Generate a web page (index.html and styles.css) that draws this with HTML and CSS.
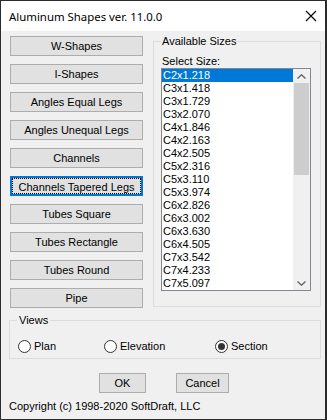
FILE: index.html
```html
<!DOCTYPE html>
<html lang="en">
<head>
    <meta charset="UTF-8">
    <meta name="viewport" content="width=device-width, initial-scale=1.0">
    <title>Aluminum Shapes</title>
    <link rel="stylesheet" href="styles.css">
</head>
<body>
    <div class="window">
        <div class="titlebar">
            <span class="title">Aluminum Shapes ver. 11.0.0</span>
            <svg class="close" width="12" height="12" viewBox="0 0 12 12">
                <path d="M1 1 L11 11 M11 1 L1 11" stroke="#000" stroke-width="1.1" fill="none"/>
            </svg>
        </div>

        <div class="content">
            <div class="main-row">
                <div class="shape-buttons">
                    <button class="btn">W-Shapes</button>
                    <button class="btn">I-Shapes</button>
                    <button class="btn">Angles Equal Legs</button>
                    <button class="btn">Angles Unequal Legs</button>
                    <button class="btn">Channels</button>
                    <button class="btn focused">Channels Tapered Legs</button>
                    <button class="btn">Tubes Square</button>
                    <button class="btn">Tubes Rectangle</button>
                    <button class="btn">Tubes Round</button>
                    <button class="btn">Pipe</button>
                </div>

                <fieldset class="group sizes">
                    <legend>Available Sizes</legend>
                    <div class="select-label">Select Size:</div>
                    <div class="listbox">
                        <div class="list-items">
                            <div class="item selected">C2x1.218</div>
                            <div class="item">C3x1.418</div>
                            <div class="item">C3x1.729</div>
                            <div class="item">C3x2.070</div>
                            <div class="item">C4x1.846</div>
                            <div class="item">C4x2.163</div>
                            <div class="item">C4x2.505</div>
                            <div class="item">C5x2.316</div>
                            <div class="item">C5x3.110</div>
                            <div class="item">C5x3.974</div>
                            <div class="item">C6x2.826</div>
                            <div class="item">C6x3.002</div>
                            <div class="item">C6x3.630</div>
                            <div class="item">C6x4.505</div>
                            <div class="item">C7x3.542</div>
                            <div class="item">C7x4.233</div>
                            <div class="item">C7x5.097</div>
                        </div>
                        <div class="scrollbar">
                            <div class="arrow">
                                <svg width="9" height="5" viewBox="0 0 9 5"><polyline points="0.5,4.5 4.5,0.8 8.5,4.5" stroke="#606060" stroke-width="1.3" fill="none"/></svg>
                            </div>
                            <div class="track">
                                <div class="thumb"></div>
                            </div>
                            <div class="arrow">
                                <svg width="9" height="5" viewBox="0 0 9 5"><polyline points="0.5,0.5 4.5,4.2 8.5,0.5" stroke="#606060" stroke-width="1.3" fill="none"/></svg>
                            </div>
                        </div>
                    </div>
                </fieldset>
            </div>

            <fieldset class="group views">
                <legend>Views</legend>
                <div class="radio-row">
                    <label class="radio"><span class="circle"></span>Plan</label>
                    <label class="radio"><span class="circle"></span>Elevation</label>
                    <label class="radio"><span class="circle checked"></span>Section</label>
                </div>
            </fieldset>

            <div class="dialog-buttons">
                <button class="btn ok">OK</button>
                <button class="btn cancel">Cancel</button>
            </div>

            <div class="copyright">Copyright (c) 1998-2020 SoftDraft, LLC</div>
        </div>
    </div>
</body>
</html>
```

FILE: styles.css
```css
body {
    margin: 0;
    padding: 0;
    background: #ffffff;
    font-family: "Liberation Sans", Arial, sans-serif;
    font-size: 11px;
    color: #000000;
}
.window {
    width: 327px;
    height: 420px;
    box-sizing: border-box;
    border: 1px solid #2b2b2b;
    border-right-width: 2px;
    background: #f0f0f0;
    overflow: hidden;
}
.titlebar {
    height: 30px;
    background: #ffffff;
    display: flex;
    align-items: center;
    justify-content: space-between;
    padding: 0 8px 0 8px;
}
.title {
    font-family: "Noto Sans", sans-serif;
    font-size: 11.4px;
}
.content {
    padding: 0 4px 0 8px;
}
.main-row {
    display: flex;
    align-items: flex-start;
}
.shape-buttons {
    display: flex;
    flex-direction: column;
    gap: 8px;
    width: 133px;
    margin: 5px 0 0 1px;
}
.btn {
    height: 20px;
    padding: 0;
    border: 1px solid #adadad;
    background: #e1e1e1;
    font-family: "Liberation Sans", Arial, sans-serif;
    font-size: 11px;
    color: #000000;
    line-height: 18px;
}
.btn.focused {
    border: 2px solid #0078d7;
    outline: 1px dotted #000000;
    outline-offset: -3px;
}
.group {
    margin: 0;
    padding: 0;
    border: 1px solid #dcdcdc;
    min-width: 0;
}
.group legend {
    padding: 0 1px;
    line-height: 13px;
    font-size: 11px;
}
.sizes {
    width: 168px;
    box-sizing: border-box;
    margin: 4px 0 0 10px;
    padding: 7px 9px 15px 7px;
}
.select-label {
    line-height: 13px;
    padding-left: 1px;
}
.listbox {
    display: flex;
    width: 150px;
    height: 223px;
    box-sizing: border-box;
    border: 1px solid #828790;
    background: #ffffff;
}
.list-items {
    flex: 1;
}
.item {
    height: 13px;
    line-height: 13px;
    padding-left: 1px;
}
.item.selected {
    background: #0078d7;
    color: #ffffff;
}
.scrollbar {
    width: 17px;
    display: flex;
    flex-direction: column;
    background: #f0f0f0;
}
.arrow {
    height: 14px;
    display: flex;
    align-items: center;
    justify-content: center;
}
.track {
    flex: 1;
    padding: 0 1px;
}
.thumb {
    height: 92px;
    background: #cdcdcd;
}
.views {
    width: 312px;
    box-sizing: border-box;
    margin-top: 6px;
    padding: 13px 8px 5px 8px;
}
.views legend {
    padding: 0 2px;
    margin-left: -1px;
}
.radio-row {
    display: grid;
    grid-template-columns: 86px 111px auto;
    height: 13px;
}
.radio {
    display: flex;
    align-items: center;
    gap: 3px;
    line-height: 13px;
}
.circle {
    width: 13px;
    height: 13px;
    box-sizing: border-box;
    border: 1px solid #333333;
    border-radius: 50%;
    background: #ffffff;
    display: flex;
    align-items: center;
    justify-content: center;
}
.circle.checked::after {
    content: "";
    width: 7px;
    height: 7px;
    border-radius: 50%;
    background: #333333;
}
.dialog-buttons {
    display: flex;
    gap: 30px;
    margin: 14px 0 0 90px;
}
.btn.ok {
    width: 47px;
}
.btn.cancel {
    width: 53px;
}
.copyright {
    margin-top: 7px;
    line-height: 13px;
}
```
